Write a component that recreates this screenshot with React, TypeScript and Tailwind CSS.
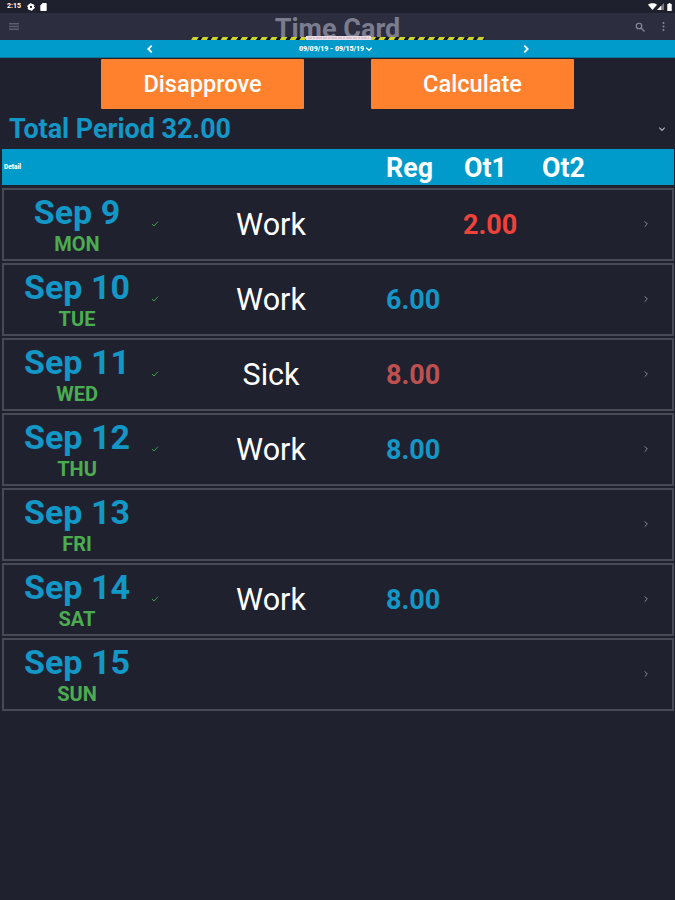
import React from "react";

interface IDay {
  date: string;
  day: string;
  type?: string;
  reg?: string;
  ot1?: string;
  color?: string;
}

const days: IDay[] = [
  { date: "Sep 9", day: "MON", type: "Work", ot1: "2.00", color: "text-[#ee433b]" },
  { date: "Sep 10", day: "TUE", type: "Work", reg: "6.00", color: "text-[#1397c6]" },
  { date: "Sep 11", day: "WED", type: "Sick", reg: "8.00", color: "text-[#c0504f]" },
  { date: "Sep 12", day: "THU", type: "Work", reg: "8.00", color: "text-[#1397c6]" },
  { date: "Sep 13", day: "FRI" },
  { date: "Sep 14", day: "SAT", type: "Work", reg: "8.00", color: "text-[#1397c6]" },
  { date: "Sep 15", day: "SUN" },
];

interface IChevron {
  d: string;
  className: string;
  width?: number;
}

const Chevron = ({ d, className, width = 3 }: IChevron) => (
  <svg
    viewBox="0 0 24 24"
    fill="none"
    stroke="currentColor"
    strokeWidth={width}
    className={className}
  >
    <path d={d} />
  </svg>
);

const LEFT = "M16 4 8 12l8 8";
const RIGHT = "m8 4 8 8-8 8";
const DOWN = "m4 8 8 8 8-8";

const StatusBar = () => (
  <div className="flex h-[13px] items-center bg-[#1f202d] pr-[3px] pl-[7px] text-white">
    <span className="w-[20px] text-[7px] leading-none font-bold">2:15</span>
    <svg viewBox="0 0 24 24" className="size-2" fill="none" stroke="currentColor">
      <circle cx="12" cy="12" r="6.5" strokeWidth="6" />
      <circle cx="12" cy="12" r="10" strokeWidth="3" strokeDasharray="5 5.47" />
    </svg>
    <svg viewBox="0 0 16 20" className="ml-[5px] h-2 w-[7px]" fill="currentColor">
      <path d="M6 0h8a2 2 0 0 1 2 2v16a2 2 0 0 1-2 2H2a2 2 0 0 1-2-2V6z" />
    </svg>
    <div className="ml-auto flex items-center">
      <svg viewBox="0 0 24 18" className="h-[7px] w-[9px]" fill="currentColor">
        <path d="M0 4C7-1 17-1 24 4L12 18z" />
      </svg>
      <svg viewBox="0 0 20 20" className="h-[7px] w-[7px]" fill="currentColor">
        <path d="M20 0v20H0z" opacity=".4" />
        <path d="M12 8v12H0z" />
      </svg>
      <svg viewBox="0 0 10 18" className="ml-[3px] h-2 w-[5px]" fill="currentColor">
        <path d="M3 0h4v2h3v16H0V2h3z" />
      </svg>
    </div>
  </div>
);

const Toolbar = () => (
  <div className="relative flex h-[27px] items-center justify-between bg-[#2c2d3f] pr-[10px] pl-[9px] text-[#898b98]">
    <svg viewBox="0 0 10 7" className="h-[7px] w-[10px]" fill="#5c5e6e">
      <path d="M0 0h10v1.5H0zM0 2.7h10v1.5H0zM0 5.5h10V7H0z" />
    </svg>
    <p className="absolute inset-x-0 top-[3px] text-center text-[27px] leading-[27px] font-bold text-[#7b7c8e]">
      Time Card
    </p>
    <div className="flex items-center gap-[17px]">
      <svg viewBox="0 0 20 20" className="size-[10px]" fill="none" stroke="currentColor" strokeWidth="2.4">
        <circle cx="8" cy="8" r="5.5" />
        <path d="m12 12 7 7" />
      </svg>
      <svg viewBox="0 0 4 18" className="h-[9px] w-[3px]" fill="currentColor">
        <circle cx="2" cy="2" r="2" />
        <circle cx="2" cy="9" r="2" />
        <circle cx="2" cy="16" r="2" />
      </svg>
    </div>
    <svg className="absolute bottom-0 left-[191px] h-[3px] w-[294px]" viewBox="0 0 294 3">
      {Array.from({ length: 30 }, (_, i) => (
        <g key={i}>
          <path d={`M${i * 9.85 + 2} 0h6l-2 3h-6z`} fill="#cbd52c" />
          <path d={`M${i * 9.85 + 8} 0h3.85l-2 3h-3.85z`} fill="#16171c" />
        </g>
      ))}
    </svg>
    <div className="absolute bottom-0 left-[306px] h-[4px] w-[65px] bg-[#e9dfe9]">
      <svg viewBox="0 0 65 4" className="h-1 w-[65px]">
        <path d="M2 2h61" stroke="#c9a3b2" strokeWidth="1" strokeDasharray="4 1 2 1 6 1" />
      </svg>
    </div>
  </div>
);

const PeriodBar = () => (
  <div className="flex h-[18px] items-center border-b border-[#08759a] bg-[#009bca] pt-px pl-[145px] text-white">
    <Chevron d={LEFT} className="size-[10px]" width={4.5} />
    <div className="ml-[144px] flex w-[222px] items-center text-[7px] leading-none font-black">
      09/09/19 - 09/15/19
      <Chevron d={DOWN} className="ml-px size-[8px]" width={4} />
    </div>
    <Chevron d={RIGHT} className="size-[10px]" width={4.5} />
  </div>
);

const DayRow = ({ item }: { item: IDay }) => (
  <div className="flex h-[73px] items-center border-2 border-[#474955]">
    <div className="flex w-[146px] flex-col items-center pt-[2px]">
      <p className="text-[34px] leading-[37px] font-bold text-[#1397c6]">{item.date}</p>
      <p className="text-[20px] leading-[27px] font-bold text-[#4cac51]">{item.day}</p>
    </div>
    <div className="w-[10px] pb-[2px] pl-px">
      {item.type && (
        <Chevron d="m3 12 6 6L21 5" className="size-[8px] text-[#3f9c48]" width={3} />
      )}
    </div>
    <p className="w-[226px] pr-[4px] text-center text-[30.5px] text-white">{item.type}</p>
    <p className={`w-[77px] pt-px text-[27px] font-bold ${item.color || ""}`}>{item.reg}</p>
    <p className={`w-[78px] pt-px text-[27px] font-bold ${item.color || ""}`}>{item.ot1}</p>
    <Chevron d={RIGHT} className="mr-[22px] mb-px ml-auto size-[8px] text-[#8b8d98]" width={3} />
  </div>
);

const App = () => {
  return (
    <div className="flex h-[900px] w-[675px] flex-col overflow-hidden bg-[#20212e] font-['Roboto','Liberation_Sans',sans-serif]">
      <StatusBar />
      <Toolbar />
      <PeriodBar />
      <div className="flex gap-[67px] pt-px pl-[101px]">
        <button className="h-[50px] w-[203px] rounded-[1px] bg-[#ff812d] pt-px text-[23.6px] font-medium text-white">
          Disapprove
        </button>
        <button className="h-[50px] w-[203px] rounded-[1px] bg-[#ff812d] pt-px text-[23.6px] font-medium text-white">
          Calculate
        </button>
      </div>
      <div className="flex h-[40px] items-center justify-between pr-[9px] pl-[9px]">
        <p className="pt-px text-[26.9px] font-bold text-[#1397c6]">Total Period 32.00</p>
        <Chevron d={DOWN} className="size-[8px] text-[#b7b8c0]" width={3.5} />
      </div>
      <div className="mr-px ml-[2px] flex h-[36px] items-center bg-[#009bca] pt-[2px] text-[26.8px] font-bold text-white">
        <span className="w-[384px] pl-[2px] text-[6.5px] font-black">Detail</span>
        <span className="w-[78px]">Reg</span>
        <span className="w-[78px]">Ot1</span>
        <span>Ot2</span>
      </div>
      <div className="mt-[3px] mr-px ml-[2px] flex flex-col gap-[2px]">
        {days.map((item) => (
          <DayRow key={item.date} item={item} />
        ))}
      </div>
    </div>
  );
};

export default App;
